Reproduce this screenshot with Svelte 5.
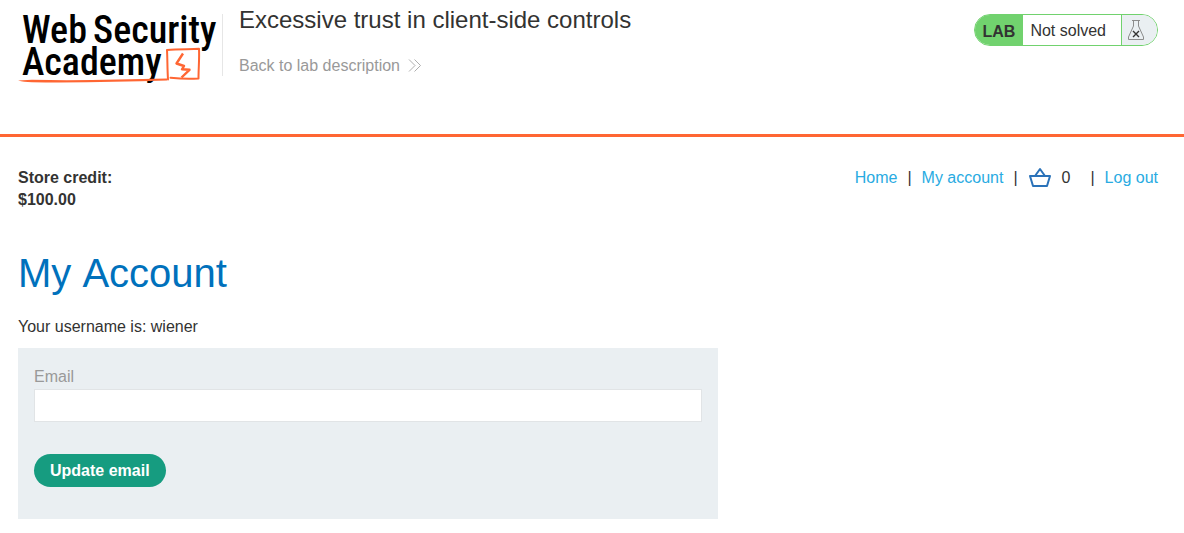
<script>
  let email = $state('');
  const credit = '$100.00';
  const username = 'wiener';
  const basketCount = 0;
</script>

<header>
  <a class="logo" href="#academy" aria-label="Web Security Academy">
    <svg width="204" height="80" viewBox="0 0 204 80">
      <g class="brand">
        <text x="4" y="38">Web</text>
        <text x="75" y="38">Security</text>
        <text x="4" y="70">Academy</text>
      </g>
      <path d="M0 75.5L14 74.800C60 75.800 105 74.500 149 73.500V75.500C105 76.500 60 78 14 77.200C8 77 4 76.500 0 75.500Z" fill="#ff6633" />
      <path
        d="M150 74.500C149.300 64 149.500 54 149 45C160 43.800 171 44.400 181 43.800C181.500 54 180.500 63 180.500 73.500C171 74.200 162 73.800 152.500 72.800"
        fill="none" stroke="#ff6633" stroke-width="2" stroke-linejoin="round" stroke-linecap="round" />
      <path d="M165 48.500L158.500 58.500L166 61L164 64.300L171.500 64.800L163.500 72.500" fill="none" stroke="#ff6633" stroke-width="2.400" stroke-linejoin="round" />
    </svg>
  </a>
  <div class="title">
    <h2>Excessive trust in client-side controls</h2>
    <a class="back" href="#description">
      Back to lab description
      <svg width="14" height="14" viewBox="0 0 14 14" fill="none" stroke="currentColor" stroke-width="0.800">
        <path d="M1 0.500L7 6.500L1 12.500M6.500 0.500L12.500 6.500L6.500 12.500" />
      </svg>
    </a>
  </div>
  <div class="status">
    <span class="lab">LAB</span>
    <span class="state">Not solved</span>
    <span class="flask">
      <svg width="18" height="22" viewBox="0 0 18 22" fill="none">
        <path d="M5 1.500H13M6.500 2V7L1.500 18V20.500H16.500V18L11.500 7V2" stroke="#8c8c8c" />
        <path d="M6 12L12 18M12 12L6 18" stroke="#333332" stroke-width="1.400" />
      </svg>
    </span>
  </div>
</header>

<main>
  <div class="top">
    <p class="credit">Store credit:<br />{credit}</p>
    <nav>
      <a href="#home">Home</a><span>|</span>
      <a href="#account">My account</a><span>|</span>
      <a class="basket" href="#cart" aria-label="Basket">
        <svg width="24" height="22" viewBox="0 0 24 22" fill="none" stroke="#2a72b9" stroke-width="2" stroke-linejoin="round">
          <path d="M2 9H22L19 19H5ZM7 9L12 2L17 9" />
        </svg>
      </a>
      <span class="count">{basketCount}</span><span>|</span>
      <a href="#logout">Log out</a>
    </nav>
  </div>

  <h1>My Account</h1>
  <p class="user">Your username is: {username}</p>

  <form onsubmit={(e) => e.preventDefault()}>
    <label for="email">Email</label>
    <input id="email" type="email" bind:value={email} />
    <button type="submit">Update email</button>
  </form>
</main>

<style>
  :global(body) {
    background: #fff;
    color: #333332;
    font: 16px/22px "Liberation Sans", Arial, sans-serif;
  }
  h1, h2, p { margin: 0; font-weight: 400; }
  a { color: #29abe2; text-decoration: none; }
  svg { display: block; }
  header {
    display: flex;
    align-items: flex-start;
    padding: 5px 26px 49px 18px;
    border-bottom: 3px solid #ff6633;
  }
  .logo { flex: none; }
  .brand {
    font-family: "Roboto Condensed", Roboto, sans-serif;
    font-size: 38px;
    font-weight: 500;
  }
  .title {
    flex: 1;
    display: flex;
    flex-direction: column;
    align-items: flex-start;
    gap: 21px;
    margin: 1px 0 0;
    padding-left: 17px;
    background: linear-gradient(#e6e6e6, #e6e6e6) 0 8px / 1px 62px no-repeat;
  }
  h2 { font-size: 24px; line-height: 28px; }
  .back {
    display: flex;
    align-items: center;
    gap: 8px;
    min-height: 22px;
    padding-bottom: 2px;
    color: #999;
  }
  .status {
    display: flex;
    box-sizing: border-box;
    height: 32px;
    margin-top: 9px;
    border: 1px solid #71d26e;
    border-radius: 16px;
    overflow: hidden;
    line-height: 32px;
  }
  .lab { padding: 1px 8px 0; background: #71d26e; font-weight: 700; }
  .state { padding: 0 15px 0 7px; }
  .flask {
    display: flex;
    align-items: center;
    padding: 0 12px 0 5px;
    border-left: 1px solid #71d26e;
    background: #eaeff2;
  }
  main { padding: 30px 26px 14px 18px; }
  .top { display: flex; justify-content: space-between; align-items: flex-start; }
  .credit { font-weight: 700; }
  nav { display: flex; align-items: center; gap: 10px; }
  .count { margin-right: 10px; }
  h1 {
    margin-top: 37px;
    color: #0071bc;
    font-size: 40px;
    font-kerning: none;
    line-height: 50px;
  }
  .user { margin-top: 18px; }
  form {
    display: flex;
    flex-direction: column;
    align-items: flex-start;
    box-sizing: border-box;
    max-width: 700px;
    margin-top: 10px;
    padding: 18px 16px 32px;
    background: #eaeff2;
  }
  label { color: #999; }
  input {
    box-sizing: border-box;
    width: 100%;
    height: 33px;
    margin: 1px 0 32px;
    padding: 0 8px;
    border: 1px solid #e1e4e6;
    background: #fff;
    font: inherit;
  }
  button {
    height: 33px;
    padding: 0 16px;
    border: 0;
    border-radius: 17px;
    background: #169c80;
    color: #fff;
    font: inherit;
    font-weight: 700;
  }
</style>
